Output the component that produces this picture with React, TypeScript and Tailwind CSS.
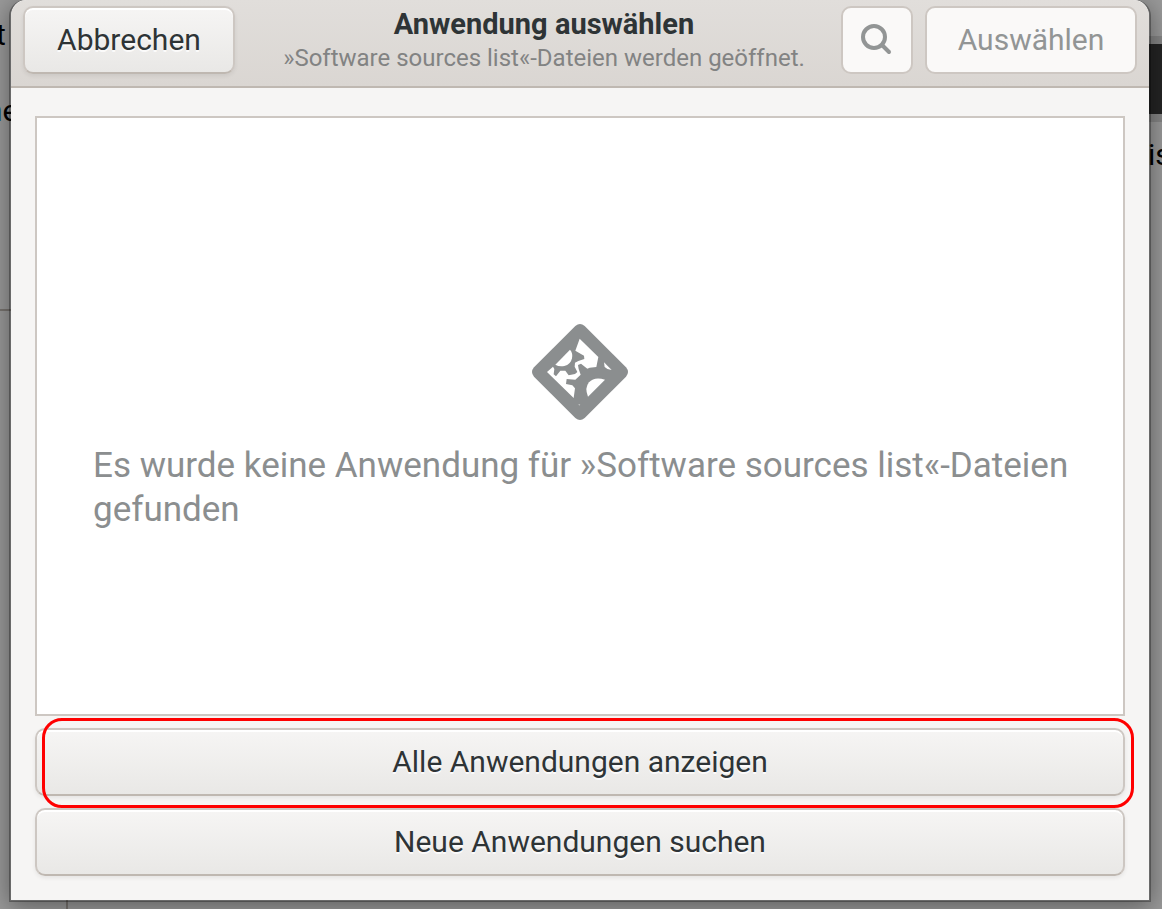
import type { ButtonHTMLAttributes } from "react";

// Raised button: light top edge, darker bottom edge, soft drop shadow
function DialogButton({ className = "", ...props }: ButtonHTMLAttributes<HTMLButtonElement>) {
  return (
    <button
      type="button"
      className={`flex h-[68px] items-center justify-center rounded-[10px] border-2 border-[#cdc7c2] text-[30px] leading-9 text-[#2e3436] enabled:border-b-[#bfb8b1] enabled:bg-linear-to-b enabled:from-[#f6f5f4] enabled:to-[#e9e8e6] enabled:shadow-[inset_0_2px_0_#ffffff,0_2px_4px_rgba(0,0,0,0.07)] enabled:[text-shadow:0_2px_0_#ffffffcc] disabled:bg-[#faf9f8] disabled:text-[#929595] ${className}`}
      {...props}
    />
  );
}

function SearchIcon() {
  return (
    <svg viewBox="0 0 32 32" className="size-8" fill="none" stroke="#929595" strokeWidth="4" aria-hidden="true">
      <circle cx="13" cy="13" r="11" />
      <path d="M21 21l7 7" strokeLinecap="round" />
    </svg>
  );
}

function NoAppIcon() {
  return (
    <svg viewBox="33 27 288 288" className="size-24" aria-hidden="true">
      <path
        fill="#8b8e8f"
        d="M163 33Q177 21 191 33L315 157Q327 171 315 185L191 309Q177 321 163 309L39 185Q27 171 39 157Z"
      />
      <g fill="#ffffff">
        <path d="M103 149L147 104Q156 114 153 130Q149 149 130 153Q114 156 103 149Z" />
        <path d="M176 71L232 126L226 156L206 158L199 161L180 146L171 150L173 162L179 179L163 194L137 192L135 207L154 211L162 220L158 249L78 171L96 155L100 162L98 178L105 184L118 167L133 167L143 181L162 177L169 171L161 155L162 143L172 138L190 132L189 122L163 107Z" />
        <path d="M249 142L272 165Q258 164 251 156Z" />
        <path d="M252 194L201 245Q190 219 204 202Q220 184 252 194Z" />
        <path d="M172 267H178L175 273Z" opacity="0.4" />
      </g>
    </svg>
  );
}

// Parts of the parent window that show on both sides of the dialog
function ParentWindow() {
  return (
    <div className="absolute inset-0 flex justify-between overflow-hidden bg-[#999999] text-[30px] leading-9 text-black" aria-hidden="true">
      <div className="flex w-[68px] flex-col border-r-2 border-[#77736f]">
        <div className="h-[311px] border-b-2 border-[#77736f] pt-[17px]">
          <p className="-ml-1">t</p>
          <p className="-ml-3.5 pt-10">
            <span className="text-[#12557f]">n</span>e
          </p>
        </div>
      </div>
      <div className="w-[14px]">
        <div className="h-9" />
        <div className="h-2 bg-[#858585]" />
        <div className="h-[70px] bg-[#242424]" />
        <div className="h-2 bg-[#858585]" />
        <p className="pt-[15px]">is</p>
      </div>
    </div>
  );
}

export default function App() {
  return (
    <div className="relative flex min-h-screen flex-col overflow-hidden pr-[11px] pb-[7px] pl-[9px] font-[Roboto,sans-serif]">
      <ParentWindow />

      <main className="relative flex grow flex-col rounded-t-2xl border-x-2 border-b-2 border-black/30 bg-[#f6f5f4] bg-clip-padding shadow-[0_4px_24px_rgba(0,0,0,0.4)]">
        <header className="flex items-start gap-3 rounded-t-2xl border-b-2 border-[#bfb8b1] bg-linear-to-b from-[#e1dedb] to-[#dad6d2] px-3 pt-[6px] pb-3">
          <DialogButton className="w-[212px]">Abbrechen</DialogButton>
          <div className="grow pl-3 text-center">
            <h1 className="text-[29px] leading-9 font-bold text-[#2e3436]">Anwendung auswählen</h1>
            <p className="text-2xl text-[#828383]">»Software sources list«-Dateien werden geöffnet.</p>
          </div>
          <DialogButton className="w-[72px]" aria-label="Suchen" disabled>
            <SearchIcon />
          </DialogButton>
          <DialogButton className="w-[212px]" disabled>
            Auswählen
          </DialogButton>
        </header>

        <div className="flex grow flex-col gap-3 px-6 pt-7 pb-6">
          <section className="flex grow flex-col items-center justify-center gap-6 border-2 border-[#cdc7c2] bg-white px-12 pt-6 text-[35px] leading-11 text-[#8b8e8f]">
            <NoAppIcon />
            <p className="w-full pl-2">Es wurde keine Anwendung für »Software sources list«-Dateien gefunden</p>
          </section>

          <div className="relative">
            <DialogButton className="w-full">Alle Anwendungen anzeigen</DialogButton>
            <div className="pointer-events-none absolute -top-[10px] -right-[9px] -bottom-3 left-[7px] rounded-[20px] border-3 border-[#ff0000]" />
          </div>
          <DialogButton className="w-full">Neue Anwendungen suchen</DialogButton>
        </div>
      </main>
    </div>
  );
}
